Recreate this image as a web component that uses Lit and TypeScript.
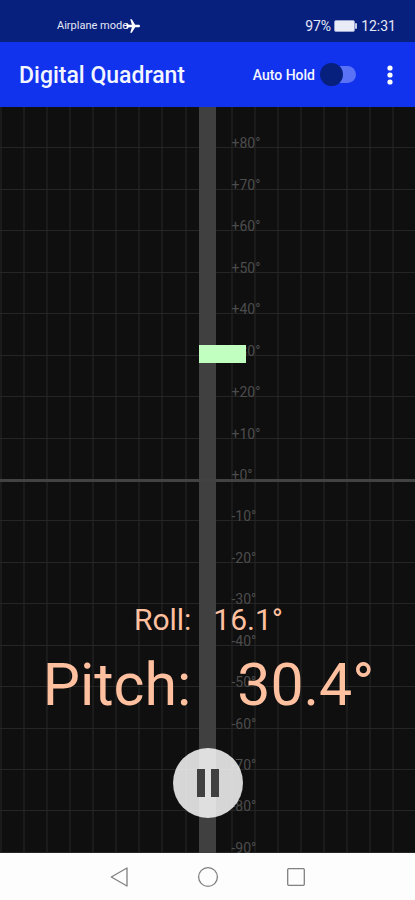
import { LitElement, html, css } from "lit";
import { customElement, property, state } from "lit/decorators.js";

const DIVISIONS = 18;

function formatAngle(degrees: number): string {
  return `${degrees < 0 ? "-" : "+"}${Math.abs(degrees)}°`;
}

@customElement("status-bar")
class StatusBar extends LitElement {
  static styles = css`
    :host {
      display: flex;
      align-items: flex-end;
      justify-content: space-between;
      box-sizing: border-box;
      height: 42px;
      padding: 0 19px 8px 57px;
      background: #071f7d;
      color: #e4e8f6;
    }
    .group {
      display: flex;
      align-items: center;
      height: 16px;
      font-size: 14px;
      line-height: 16px;
    }
    .mode {
      font-size: 11px;
    }
    .plane {
      margin-left: -2px;
    }
    .battery {
      margin: 0 4px 0 3px;
    }
    svg {
      display: block;
    }
  `;

  render() {
    return html`
      <div class="group mode">
        <span>Airplane mode</span>
        <svg class="plane" width="14" height="14" viewBox="0 0 14 14" aria-hidden="true">
          <path
            d="M14 7c0-.8-.6-1.300-1.400-1.300H9.200L5.800.2H4.200l1.700 5.500H2.700L1.500 4.200H.2L.9 7 .2 9.800h1.300l1.200-1.500h3.200l-1.700 5.500h1.600l3.400-5.500h3.400C13.400 8.300 14 7.800 14 7z"
            fill="#fff"
          />
        </svg>
      </div>
      <div class="group">
        <span>97%</span>
        <svg class="battery" width="23" height="12" viewBox="0 0 23 12" aria-hidden="true">
          <rect x=".5" y=".5" width="20" height="11" rx="1.500" fill="#e9ebf6" stroke="#98a3cf" />
          <rect x="21" y="3" width="2" height="6" rx="1" fill="#c5cbe4" />
        </svg>
        <span>12:31</span>
      </div>
    `;
  }
}

@customElement("title-bar")
class TitleBar extends LitElement {
  static styles = css`
    :host {
      display: flex;
      align-items: center;
      box-sizing: border-box;
      height: 65px;
      padding: 0 13px 0 19px;
      background: #1133ee;
      color: #f4f6ff;
      font-weight: 500;
    }
    h1 {
      flex: 1;
      margin: 0;
      padding-top: 2px;
      font-size: 23px;
      line-height: 28px;
      font-weight: 500;
      white-space: nowrap;
    }
    .hold {
      display: flex;
      align-items: center;
      gap: 5px;
      font-size: 14px;
      line-height: 16px;
    }
    .switch {
      appearance: none;
      position: relative;
      width: 36px;
      height: 23px;
      margin: 0;
      cursor: pointer;
    }
    .switch::before {
      content: "";
      position: absolute;
      inset: 3px 0 3px 4px;
      border-radius: 9px;
      background: #5a72f6;
    }
    .switch::after {
      content: "";
      position: absolute;
      top: 0;
      left: 0;
      width: 23px;
      height: 23px;
      border-radius: 50%;
      background: #071f7d;
    }
    .switch:checked::after {
      left: auto;
      right: 0;
    }
    .menu {
      width: 24px;
      height: 32px;
      margin-left: 22px;
      padding: 0;
      border: 0;
      background: none;
      cursor: pointer;
    }
    svg {
      display: block;
      margin: auto;
    }
  `;

  render() {
    return html`
      <h1>Digital Quadrant</h1>
      <label class="hold">
        Auto Hold
        <input class="switch" type="checkbox" role="switch" />
      </label>
      <button class="menu" aria-label="More options">
        <svg width="6" height="20" viewBox="0 0 6 20">
          <g fill="#fff">
            <circle cx="3" cy="3" r="2.600" />
            <circle cx="3" cy="10" r="2.600" />
            <circle cx="3" cy="17" r="2.600" />
          </g>
        </svg>
      </button>
    `;
  }
}

@customElement("pitch-scale")
class PitchScale extends LitElement {
  @property({ type: Number }) pitch = 0;
  @property({ type: Number }) roll = 0;
  @state() private held = false;

  static styles = css`
    :host {
      display: flex;
      position: relative;
      flex: 1;
      min-height: 600px;
      overflow: hidden;
      background: #0f0f0f;
    }
    .layer {
      position: absolute;
      inset: 0;
      display: flex;
      margin: 0;
      padding: 0;
      list-style: none;
    }
    .column {
      flex: 1;
      border-left: 2px solid #1b1b1b;
    }
    .rows {
      flex-direction: column;
    }
    .row {
      display: flex;
      flex: 1;
      align-items: flex-end;
      box-sizing: border-box;
      min-height: 0;
      border-bottom: 1px solid #252525;
      padding-left: calc(50% + 24px);
      color: #4c4c4c;
      font-size: 14px;
      line-height: 8px;
    }
    .bar {
      width: 17px;
      margin: 0 auto;
      background: #404040;
    }
    .horizon {
      position: absolute;
      top: 50%;
      left: 0;
      right: 0;
      height: 3px;
      margin-top: -1px;
      background: #424242;
    }
    .marker {
      position: absolute;
      left: calc(50% - 9px);
      width: 47px;
      height: 18px;
      margin-top: -9px;
      background: #c0ffc0;
    }
    .panel {
      flex-direction: column;
      align-items: center;
      justify-content: flex-end;
      padding-bottom: 35px;
      color: #ffc0a0;
      white-space: nowrap;
    }
    .roll,
    .pitch {
      display: flex;
      padding-left: 2px;
    }
    .roll {
      gap: 22px;
      font-size: 30px;
      line-height: 36px;
      margin-bottom: 11px;
    }
    .pitch {
      gap: 46px;
      font-size: 59px;
      line-height: 72px;
      margin-bottom: 27px;
    }
    .hold {
      width: 70px;
      height: 70px;
      padding: 0;
      border: 0;
      border-radius: 50%;
      background: rgba(255, 255, 255, 0.83);
      cursor: pointer;
    }
    svg {
      display: block;
      margin: auto;
    }
  `;

  render() {
    const steps = Array.from({ length: DIVISIONS }, (_, i) => i);
    const offset = 50 - (this.pitch / 180) * 100;
    return html`
      <div class="layer">${steps.map(() => html`<div class="column"></div>`)}</div>
      <ol class="layer rows">
        ${steps.map((i) => html`<li class="row">${formatAngle(80 - i * 10)}</li>`)}
      </ol>
      <div class="layer"><div class="bar"></div></div>
      <div class="horizon"></div>
      <div class="marker" style="top:${offset}%"></div>
      <div class="layer panel">
        <div class="roll"><span>Roll:</span><span>${this.roll.toFixed(1)}°</span></div>
        <div class="pitch"><span>Pitch:</span><span>${this.pitch.toFixed(1)}°</span></div>
        <button
          class="hold"
          aria-label=${this.held ? "Resume" : "Pause"}
          @click=${() => (this.held = !this.held)}
        >
          <svg width="22" height="28" viewBox="0 0 22 28" fill="#404040">
            <path d=${this.held ? "M1 0l21 14L1 28z" : "M0 0h8v28H0zM14 0h8v28h-8z"} />
          </svg>
        </button>
      </div>
    `;
  }
}

@customElement("nav-bar")
class NavBar extends LitElement {
  static styles = css`
    :host {
      display: flex;
      align-items: center;
      justify-content: center;
      gap: 64px;
      height: 47px;
      background: #fdfdfd;
    }
    button {
      width: 24px;
      height: 24px;
      padding: 0;
      border: 0;
      background: none;
      cursor: pointer;
    }
    svg {
      display: block;
      fill: none;
      stroke: #808080;
      stroke-linejoin: round;
    }
  `;

  render() {
    return html`
      <button aria-label="Back">
        <svg width="24" height="24" viewBox="0 0 24 24" stroke-width="1.3"><path d="M19 3v18L3.300 12z" /></svg>
      </button>
      <button aria-label="Home">
        <svg width="24" height="24" viewBox="0 0 24 24" stroke-width="1.3"><circle cx="12" cy="12" r="9.400" /></svg>
      </button>
      <button aria-label="Recent apps">
        <svg width="24" height="24" viewBox="0 0 24 24" stroke-width="1.3">
          <rect x="3.700" y="3.700" width="16.600" height="16.600" rx="1" />
        </svg>
      </button>
    `;
  }
}

@customElement("app-root")
class AppRoot extends LitElement {
  static styles = css`
    :host {
      display: flex;
      flex-direction: column;
      min-height: 100vh;
      font-family: Roboto, "Noto Sans", sans-serif;
    }
  `;

  render() {
    return html`
      <status-bar></status-bar>
      <title-bar></title-bar>
      <pitch-scale .pitch=${30.4} .roll=${16.1}></pitch-scale>
      <nav-bar></nav-bar>
    `;
  }
}
